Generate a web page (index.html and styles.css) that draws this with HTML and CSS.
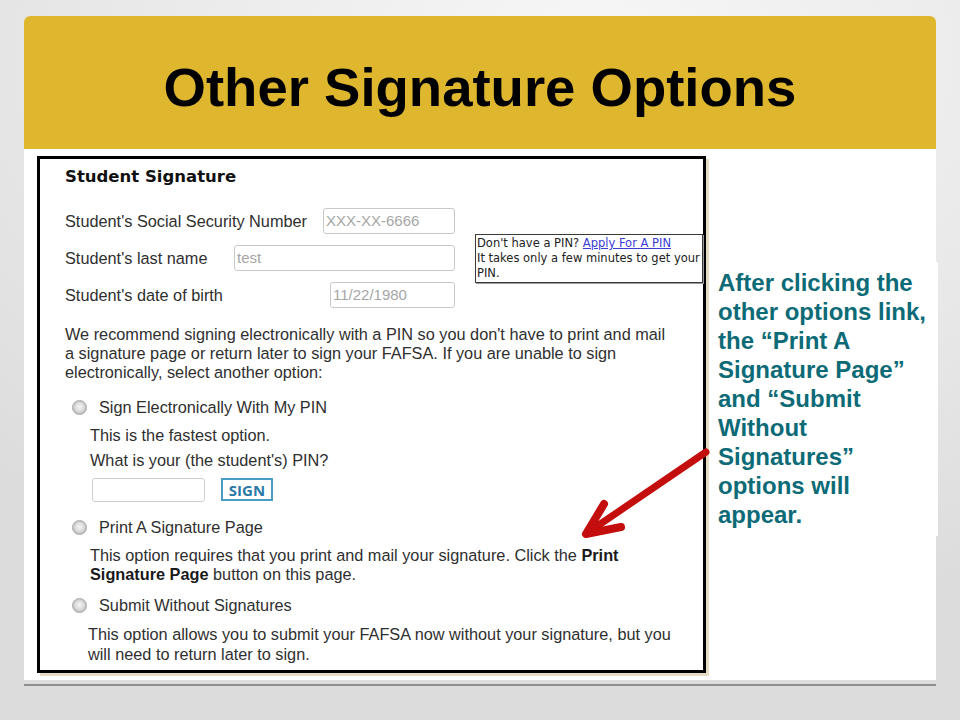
FILE: index.html
```html
<!DOCTYPE html>
<html lang="en">
<head>
<meta charset="utf-8">
<title>Other Signature Options</title>
<link rel="stylesheet" href="styles.css">
</head>
<body>
<div class="slide">
  <header class="slide-head">
    <h1>Other Signature Options</h1>
  </header>
  <div class="slide-body">
    <section class="form">
      <h2 class="form-title">Student Signature</h2>
      <div class="top">
        <div class="fields">
          <div class="row">
            <span class="label">Student's Social Security Number</span>
            <span class="input w1">XXX-XX-6666</span>
          </div>
          <div class="row">
            <span class="label">Student's last name</span>
            <span class="input w2">test</span>
          </div>
          <div class="row">
            <span class="label">Student's date of birth</span>
            <span class="input w3">11/22/1980</span>
          </div>
        </div>
        <div class="tip">
          Don't have a PIN? <a class="tip-link" href="#">Apply For A PIN</a><br>
          It takes only a few minutes to get your<br>
          PIN.
        </div>
      </div>
      <p class="intro">We recommend signing electronically with a PIN so you don't have to print and mail<br>a signature page or return later to sign your FAFSA. If you are unable to sign<br>electronically, select another option:</p>

      <div class="option first">
        <span class="radio"></span>
        <span class="opt-label">Sign Electronically With My PIN</span>
      </div>
      <p class="sub s1">This is the fastest option.</p>
      <p class="sub s2">What is your (the student's) PIN?</p>
      <div class="pin-row">
        <span class="pin-input"></span>
        <span class="sign-btn">SIGN</span>
      </div>

      <div class="option second">
        <span class="radio"></span>
        <span class="opt-label">Print A Signature Page</span>
      </div>
      <p class="sub s3">This option requires that you print and mail your signature. Click the <b>Print</b><br><b>Signature Page</b> button on this page.</p>

      <div class="option third">
        <span class="radio"></span>
        <span class="opt-label">Submit Without Signatures</span>
      </div>
      <p class="sub s4">This option allows you to submit your FAFSA now without your signature, but you<br>will need to return later to sign.</p>
    </section>

    <aside class="note">After clicking the<br>other options link,<br>the “Print A<br>Signature Page”<br>and “Submit<br>Without<br>Signatures”<br>options will<br>appear.</aside>

    <svg class="arrow" width="160" height="100" viewBox="0 0 160 100">
      <line x1="127" y1="8" x2="11" y2="87" stroke="#c40d0d" stroke-width="7" stroke-linecap="round"/>
      <polyline points="25,60 7,90 42,83" fill="none" stroke="#c40d0d" stroke-width="8" stroke-linecap="round" stroke-linejoin="round"/>
    </svg>
  </div>
</div>
<div class="rule"></div>
</body>
</html>
```

FILE: styles.css
```css
html, body {
  margin: 0;
  padding: 0;
}

body {
  width: 960px;
  height: 720px;
  overflow: hidden;
  background: radial-gradient(ellipse 90% 80% at 62% 8%, #f7f7f7 0%, #e9e9e9 55%, #dcdcdc 100%);
  font-family: "Liberation Sans", Arial, sans-serif;
}

.slide {
  margin: 16px 0 0 24px;
  width: 912px;
  background: #ffffff;
  border-radius: 6px 6px 0 0;
}

.slide-head {
  height: 133px;
  background: #dfb72f;
  border-radius: 6px 6px 0 0;
  display: flex;
  align-items: center;
  justify-content: center;
}

.slide-head h1 {
  margin: 11px 0 0 0;
  font-family: "Liberation Sans", Arial, sans-serif;
  font-weight: bold;
  font-size: 54.5px;
  line-height: 54px;
  color: #000;
}

.slide-body {
  position: relative;
  height: 531px;
  box-sizing: border-box;
  padding: 7px 0 0 13px;
  display: flex;
  align-items: flex-start;
}

.form {
  width: 669px;
  height: 517px;
  box-sizing: border-box;
  flex: none;
  border: 3px solid #000;
  box-shadow: 3px 3px 0 #e6dcc4;
  background: #fff;
  color: #333;
  font-size: 16.3px;
  display: flex;
  flex-direction: column;
  align-items: flex-start;
}

.form-title {
  margin: 8px 0 0 25px;
  font-family: "DejaVu Sans", Tahoma, sans-serif;
  font-weight: bold;
  font-size: 16.5px;
  line-height: 20px;
  color: #111;
}

.top {
  display: flex;
  align-items: flex-start;
  margin: 21px 0 0 25px;
}

.fields {
  width: 390px;
  display: flex;
  flex-direction: column;
  gap: 11px;
}

.row {
  display: flex;
  align-items: center;
  justify-content: space-between;
  height: 26px;
}

.label {
  color: #2f2f2f;
  line-height: 20px;
}

.input {
  height: 26px;
  box-sizing: border-box;
  border: 1px solid #c9c9c9;
  border-radius: 3px;
  padding: 0 0 0 2px;
  font-size: 15px;
  line-height: 24px;
  color: #a6a6a6;
  background: #fff;
}

.w1 { width: 132px; }
.w2 { width: 221px; }
.w3 { width: 125px; }

.tip {
  margin: 26px 0 0 20px;
  width: 228px;
  height: 49px;
  box-sizing: border-box;
  border: 1px solid #3a3a3a;
  box-shadow: 1px 1px 0 #9a9a9a;
  padding: 1px 0 0 1px;
  font-family: "DejaVu Sans", Tahoma, sans-serif;
  font-size: 11.5px;
  line-height: 15px;
  color: #222;
  white-space: nowrap;
}

.tip-link {
  color: #3b3bd6;
  text-decoration: underline;
}

.intro {
  margin: 17px 0 0 25px;
  line-height: 19px;
  color: #2f2f2f;
}

.option {
  display: flex;
  align-items: center;
  height: 20px;
  margin-left: 32px;
}

.option.first { margin-top: 15px; }
.option.second { margin-top: 15px; }
.option.third { margin-top: 11px; }

.radio {
  width: 15px;
  height: 15px;
  box-sizing: border-box;
  border-radius: 50%;
  border: 1px solid #a9a9a9;
  background: radial-gradient(circle at 50% 45%, #f4f4f4 0%, #dcdcdc 45%, #b8b8b8 100%);
  box-shadow: inset 0 0 2px rgba(0, 0, 0, 0.2);
}

.opt-label {
  margin-left: 12px;
  line-height: 20px;
  color: #2f2f2f;
}

.sub {
  margin: 0 0 0 50px;
  line-height: 19px;
  color: #2f2f2f;
}

.sub b {
  color: #1a1a1a;
}

.s1 { margin-top: 9px; }
.s2 { margin-top: 6px; }
.s3 { margin-top: 9px; }
.s4 { margin-top: 9px; margin-left: 48px; line-height: 20px; }

.pin-row {
  display: flex;
  align-items: flex-start;
  margin: 8px 0 0 52px;
}

.pin-input {
  width: 113px;
  height: 24px;
  box-sizing: border-box;
  border: 1px solid #cfcfcf;
  border-radius: 3px;
  background: #fff;
}

.sign-btn {
  margin-left: 16px;
  width: 52px;
  height: 23px;
  box-sizing: border-box;
  border: 2px solid #4b9cc5;
  display: flex;
  align-items: center;
  justify-content: center;
  font-family: "Open Sans", sans-serif;
  font-weight: bold;
  font-size: 15px;
  color: #2a7aa8;
  background: #fff;
}

.note {
  flex: none;
  margin: 106px 0 0 3px;
  width: 229px;
  height: 274px;
  box-sizing: border-box;
  padding: 6px 0 0 9px;
  background: #fff;
  font-family: "Liberation Sans", Arial, sans-serif;
  font-weight: bold;
  font-size: 24px;
  line-height: 29px;
  color: #0d6b77;
  white-space: nowrap;
}

.arrow {
  position: absolute;
  left: 555px;
  top: 295px;
  overflow: visible;
}

.rule {
  margin: 4px 0 0 24px;
  width: 912px;
  height: 2px;
  background: #8e8e8e;
}
```
